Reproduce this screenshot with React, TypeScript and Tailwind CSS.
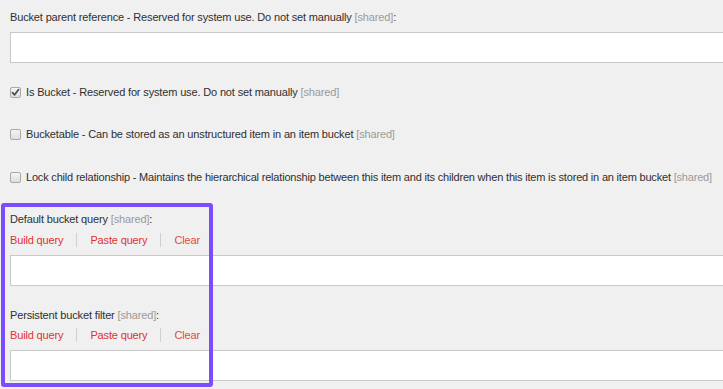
import React from "react";

const Shared = () => <span className="text-[#9a9a9a]">[shared]</span>;

const Check = ({ checked }: { checked?: boolean }) => (
  <span className="flex h-[11px] w-[11px] shrink-0 items-center justify-center rounded-[2px] border border-[#a9a9a9] bg-gradient-to-b from-[#f4f4f4] to-[#dedede]">
    {checked && (
      <svg width="9" height="9" viewBox="0 0 9 9">
        <path d="M1.5 4.6 L3.6 6.8 L7.6 1.6" fill="none" stroke="#4a4a4a" strokeWidth="1.7" strokeLinecap="round" strokeLinejoin="round" />
      </svg>
    )}
  </span>
);

const Input = ({ className = "" }: { className?: string }) => (
  <div className={`h-[31px] w-[760px] border border-[#c9c9c9] bg-white ${className}`} />
);

const QueryLinks = ({ className = "" }: { className?: string }) => (
  <div className={`flex h-[16px] items-center text-[#de3030] ${className}`}>
    <span>Build query</span>
    <span className="mx-[13px] h-[14px] w-px bg-[#cfcfcf]" />
    <span>Paste query</span>
    <span className="mx-[13px] h-[14px] w-px bg-[#cfcfcf]" />
    <span className="text-[#e34a3a]">Clear</span>
  </div>
);

export default function App() {
  return (
    <div
      className="relative h-[389px] w-[723px] overflow-hidden bg-[#f0f0f0] text-[11px] tracking-[-0.15px] text-[#2f2f2f]"
      style={{ fontFamily: '"Liberation Sans", Arial, sans-serif' }}
    >
      <div className="flex flex-col pl-[10px] pt-[9px]">
        <div className="h-[16px] leading-[16px] whitespace-nowrap">
          Bucket parent reference - Reserved for system use. Do not set manually <Shared />:
        </div>
        <Input className="mt-[7px]" />

        <div className="mt-[21px] flex h-[16px] items-center gap-[5px] whitespace-nowrap leading-[16px]">
          <Check checked />
          <span>
            Is Bucket - Reserved for system use. Do not set manually <Shared />
          </span>
        </div>

        <div className="mt-[26px] flex h-[16px] items-center gap-[5px] whitespace-nowrap leading-[16px]">
          <Check />
          <span>
            Bucketable - Can be stored as an unstructured item in an item bucket <Shared />
          </span>
        </div>

        <div className="mt-[27px] flex h-[16px] items-center gap-[5px] whitespace-nowrap leading-[16px]">
          <Check />
          <span className="tracking-[-0.19px]">
            Lock child relationship - Maintains the hierarchical relationship between this item and its children when this item is stored in an item bucket <Shared />
          </span>
        </div>

        <div className="mt-[26px] h-[16px] whitespace-nowrap leading-[16px]">
          Default bucket query <Shared />:
        </div>
        <QueryLinks className="mt-[5px]" />
        <Input className="mt-[7px]" />

        <div className="mt-[21px] h-[16px] whitespace-nowrap leading-[16px]">
          Persistent bucket filter <Shared />:
        </div>
        <QueryLinks className="mt-[4px]" />
        <Input className="mt-[7px]" />
      </div>

      <div className="pointer-events-none absolute left-[1px] top-[203px] h-[184px] w-[212px] rounded-[3px] border-[4px] border-[#7b4dff]" />
    </div>
  );
}
